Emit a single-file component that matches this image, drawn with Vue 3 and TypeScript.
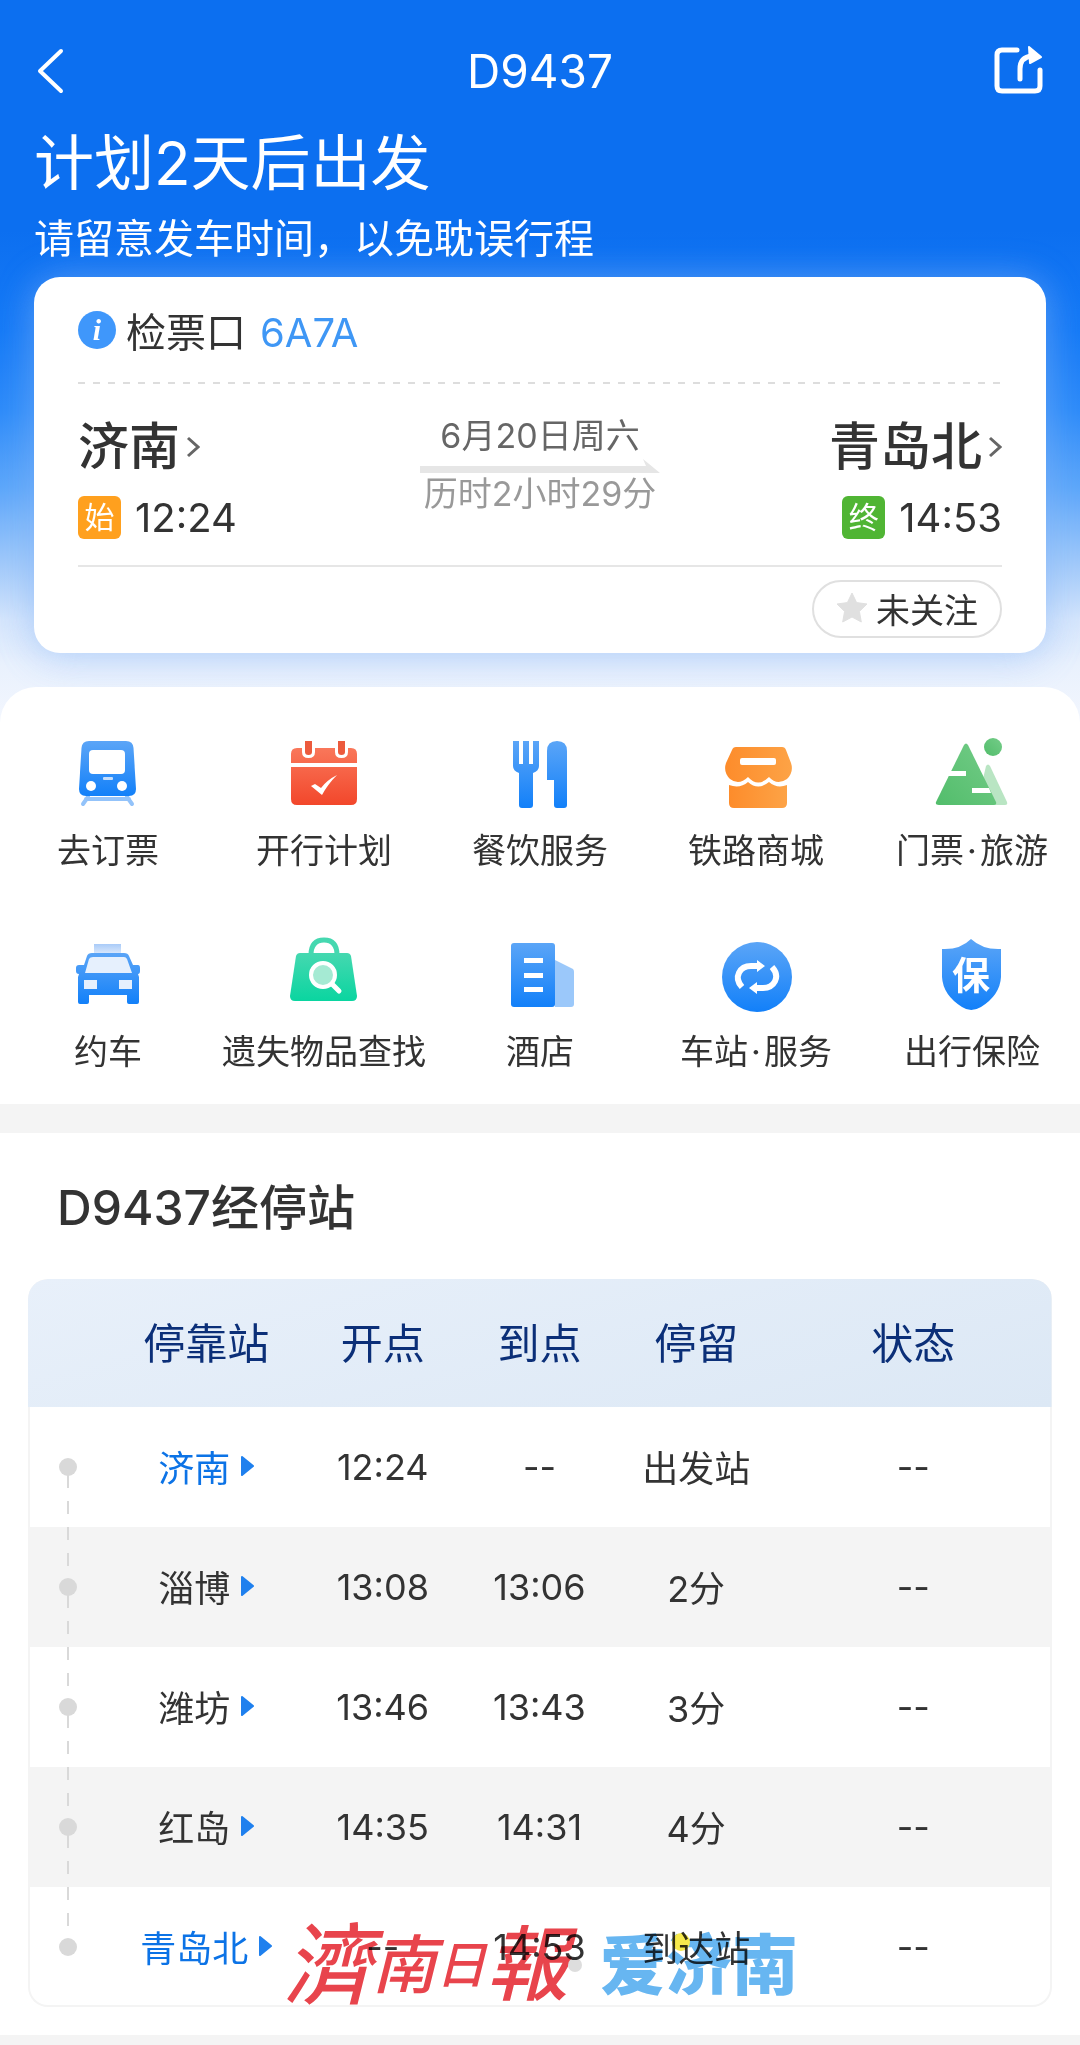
<script setup lang="ts">
interface Service {
  icon: string
  label: string[]
}

interface Stop {
  station: string
  depart: string
  arrive: string
  stay: string
  status: string
  terminal?: boolean
}

const trainNo = 'D9437'

const services: Service[] = [
  { icon: 'train', label: ['去订票'] },
  { icon: 'calendar', label: ['开行计划'] },
  { icon: 'dining', label: ['餐饮服务'] },
  { icon: 'store', label: ['铁路商城'] },
  { icon: 'mountain', label: ['门票', '旅游'] },
  { icon: 'taxi', label: ['约车'] },
  { icon: 'bag', label: ['遗失物品查找'] },
  { icon: 'hotel', label: ['酒店'] },
  { icon: 'station', label: ['车站', '服务'] },
  { icon: 'shield', label: ['出行保险'] },
]

const stops: Stop[] = [
  { station: '济南', depart: '12:24', arrive: '--', stay: '出发站', status: '--', terminal: true },
  { station: '淄博', depart: '13:08', arrive: '13:06', stay: '2分', status: '--' },
  { station: '潍坊', depart: '13:46', arrive: '13:43', stay: '3分', status: '--' },
  { station: '红岛', depart: '14:35', arrive: '14:31', stay: '4分', status: '--' },
  { station: '青岛北', depart: '--', arrive: '14:53', stay: '到达站', status: '--', terminal: true },
]
</script>

<template>
  <div class="page">
    <svg class="defs" width="0" height="0" aria-hidden="true">
      <defs>
        <linearGradient id="g-blue" x1="0" y1="0" x2="0" y2="1">
          <stop offset="0" stop-color="#5ba5f7" />
          <stop offset="1" stop-color="#1280f9" />
        </linearGradient>
        <linearGradient id="g-red" gradientUnits="userSpaceOnUse" x1="0" y1="7" x2="0" y2="72">
          <stop offset="0" stop-color="#fa7d60" />
          <stop offset="1" stop-color="#f2462a" />
        </linearGradient>
        <linearGradient id="g-orange" x1="0" y1="0" x2="1" y2="0">
          <stop offset="0" stop-color="#fd8c2b" />
          <stop offset="1" stop-color="#fda346" />
        </linearGradient>
        <linearGradient id="g-green" x1="0" y1="1" x2="1" y2="0">
          <stop offset="0" stop-color="#52bd6b" />
          <stop offset="1" stop-color="#74cc88" />
        </linearGradient>
        <linearGradient id="g-mint" x1="0" y1="0" x2="0" y2="1">
          <stop offset="0" stop-color="#45d8b0" />
          <stop offset="1" stop-color="#0ad5a0" />
        </linearGradient>
        <linearGradient id="g-sign" x1="0" y1="0" x2="0" y2="1">
          <stop offset="0" stop-color="#a9cbf8" />
          <stop offset="1" stop-color="#dce9fc" />
        </linearGradient>
      </defs>
    </svg>

    <header class="hero">
      <nav class="nav">
        <button class="icon-btn" type="button" aria-label="返回">
          <svg width="52" height="52" viewBox="0 0 52 52">
            <path d="M27 6 L6 26 L27 46" fill="none" stroke="#fff" stroke-width="4" stroke-linecap="round" stroke-linejoin="round" />
          </svg>
        </button>
        <span class="nav-title">{{ trainNo }}</span>
        <button class="icon-btn" type="button" aria-label="分享">
          <svg width="52" height="52" viewBox="0 0 52 52">
            <g fill="none" stroke="#fff" stroke-width="5" stroke-linecap="round" stroke-linejoin="round">
              <path d="M23 5 H8 Q3 5 3 10 V41 Q3 46 8 46 H41 Q46 46 46 41 V25" />
              <path d="M26 34 V24 Q26 12 38 11" />
            </g>
            <path d="M35 2 L47 12 L36 18 Z" fill="#fff" stroke="#fff" stroke-width="2" stroke-linejoin="round" />
          </svg>
        </button>
      </nav>
      <h1>计划2天后出发</h1>
      <p class="hint">请留意发车时间，以免耽误行程</p>

      <section class="card">
        <div class="gate">
          <span class="info">i</span>
          <span>检票口<span class="gate-no">6A7A</span></span>
        </div>
        <div class="dashes"></div>
        <div class="trip">
          <div class="end">
            <a class="city" href="#">
              济南
              <svg width="14" height="22" viewBox="0 0 14 22"><path d="M2 2 L12 11 L2 20" fill="none" stroke="#666" stroke-width="3" /></svg>
            </a>
            <div class="time"><span class="tag tag-start">始</span>12:24</div>
          </div>
          <div class="middle">
            <span class="date">6月20日周六</span>
            <svg width="240" height="14" viewBox="0 0 240 14"><path d="M0 7 H226 L223 0 L240 14 H0 Z" fill="#e6e6e6" /></svg>
            <span class="duration">历时2小时29分</span>
          </div>
          <div class="end end-right">
            <a class="city" href="#">
              青岛北
              <svg width="14" height="22" viewBox="0 0 14 22"><path d="M2 2 L12 11 L2 20" fill="none" stroke="#666" stroke-width="3" /></svg>
            </a>
            <div class="time"><span class="tag tag-end">终</span>14:53</div>
          </div>
        </div>
        <div class="card-foot">
          <button class="follow" type="button">
            <svg width="32" height="32" viewBox="0 0 32 32">
              <path d="M16 1 L20.6 10.6 L31 12 L23.4 19.4 L25.3 30 L16 25 L6.7 30 L8.6 19.4 L1 12 L11.4 10.6 Z" fill="#e0e0e0" stroke="#e0e0e0" stroke-linejoin="round" />
            </svg>
            未关注
          </button>
        </div>
      </section>
    </header>

    <section class="services">
      <a v-for="item in services" :key="item.icon" class="service" href="#">
        <svg width="80" height="80" viewBox="0 0 80 80" aria-hidden="true">
          <g v-if="item.icon === 'train'">
            <path d="M20 63 L15 70 M59 63 L64 70 M18 65 H61" fill="none" stroke="#93c3fa" stroke-width="4" stroke-linecap="round" />
            <path d="M21 7 H58 Q65 7 65.500 14 L68 55 Q68 62 61 62 H18 Q11 62 11 55 L13.500 14 Q14 7 21 7 Z" fill="url(#g-blue)" />
            <rect x="21" y="16" width="36" height="24" rx="4" fill="#fff" />
            <rect x="35" y="43" width="10" height="3" rx="1" fill="#c5defc" />
            <circle cx="23" cy="52" r="5" fill="#fff" />
            <circle cx="54" cy="52" r="5" fill="#fff" />
          </g>
          <g v-else-if="item.icon === 'calendar'">
            <path d="M13 14 H67 Q73 14 73 20 V29 H7 V20 Q7 14 13 14 Z M7 33 H73 V65 Q73 71 67 71 H13 Q7 71 7 65 Z" fill="url(#g-red)" />
            <path d="M18 10 H31 V18 Q31 24 24.500 24 Q18 24 18 18 Z M51 10 H64 V18 Q64 24 57.500 24 Q51 24 51 18 Z" fill="#fff" />
            <path d="M21 7 H28 V18 Q28 21 24.500 21 Q21 21 21 18 Z M54 7 H61 V18 Q61 21 57.500 21 Q54 21 54 18 Z" fill="#ec5a3d" />
            <path d="M27 52 L31 50 L37 54 Q43 46 53 41 Q44 50 38 61 Z" fill="#fff" />
          </g>
          <g v-else-if="item.icon === 'dining'" fill="url(#g-blue)">
            <path d="M13 7 H19 V30 H23 V7 H29 V30 H33 V7 H39 V32 Q39 37 33 39 V71 Q33 74 30 74 H22 Q19 74 19 71 V39 Q13 37 13 32 Z" />
            <path d="M47 17 Q47 7 57 7 Q67 7 67 17 V71 Q67 74 64 74 H57 Q54 74 54 71 V46 H47 Z" />
          </g>
          <g v-else-if="item.icon === 'store'" fill="url(#g-orange)">
            <path d="M20 13 H66 Q69 13 70 16 L75 29 Q78 38 71 45 Q61 52 53 43 Q42 54 32 43 Q23 52 14 45 Q7 38 10 29 L16 16 Q17 13 20 13 Z" />
            <path d="M13 51 Q24 55 32 48 Q42 57 53 48 Q61 55 71 51 V69 Q71 74 66 74 H18 Q13 74 13 69 Z" />
            <rect x="24" y="24" width="36" height="7" rx="2" fill="#fff" />
          </g>
          <g v-else-if="item.icon === 'mountain'">
            <path d="M54 32 Q56 29 58 32 L75 68 Q76 71 73 71 H45 Z" fill="#b9e5c3" />
            <path d="M32 11 Q34 8 36 11 L64 68 Q65 71 62 71 H7 Q3 71 4 68 Z" fill="url(#g-green)" />
            <circle cx="61" cy="13" r="9" fill="url(#g-green)" />
            <path d="M16 37 H34 V42 H13 Z M40 54 H57 L59 59 H40 Z" fill="#fff" />
          </g>
          <g v-else-if="item.icon === 'taxi'">
            <rect x="26" y="9" width="27" height="10" fill="url(#g-sign)" />
            <path d="M24 18 H56 Q60 18 61 21 L65 30 H70 Q72 30 72 33 V36 Q72 39 70 39 L71 42 V67 Q71 69 69 69 H61 Q59 69 59 67 V60 H21 V67 Q21 69 19 69 H12 Q10 69 10 67 V42 L11 39 Q8 39 8 36 V33 Q8 30 11 30 H16 L19 21 Q20 18 24 18 Z" fill="url(#g-blue)" />
            <path d="M25 22 H56 Q58 22 59 24 L64 38 H17 L21 24 Q22 22 25 22 Z M16 45 H29 V54 H16 Z M51 45 H64 V54 H51 Z" fill="#e6f0fd" />
          </g>
          <g v-else-if="item.icon === 'bag'">
            <path d="M27 20 Q27 5 40 5 Q53 5 53 20" fill="none" stroke="#45d8b0" stroke-width="5" />
            <path d="M16 18 H63 Q66 18 67 21 L73 61 Q73 66 68 66 H11 Q6 66 6 61 L12 21 Q13 18 16 18 Z" fill="url(#g-mint)" />
            <path d="M48 49 L55 56" stroke="#fff" stroke-width="5" stroke-linecap="round" />
            <circle cx="39" cy="40" r="12" fill="#a5ead3" stroke="#fff" stroke-width="4" />
          </g>
          <g v-else-if="item.icon === 'hotel'">
            <path d="M55 25 L73 34 Q74 35 74 37 V69 Q74 72 71 72 H55 Z" fill="#9bc8fa" />
            <rect x="11" y="8" width="44" height="64" rx="3" fill="url(#g-blue)" />
            <path d="M24 23 H43 V28 H24 Z M24 38 H43 V43 H24 Z M24 52 H43 V57 H24 Z" fill="#fff" />
          </g>
          <g v-else-if="item.icon === 'station'">
            <circle cx="41" cy="42" r="35" fill="url(#g-blue)" />
            <g fill="none" stroke="#fff" stroke-width="6">
              <path d="M26 52 C17 42 24 31 35 31 H42" />
              <path d="M56 32 C65 42 58 53 47 53 H40" />
            </g>
            <path d="M41 25 L49 31 L41 37 Z M41 47 L33 53 L41 59 Z" fill="#fff" />
          </g>
          <g v-else>
            <path d="M39 4 Q51 15 69 14 V42 Q68 60 49 72 Q39 78 30 72 Q11 60 10 42 V14 Q28 15 39 4 Z" fill="url(#g-blue)" />
            <text class="shield-text" x="39" y="54" text-anchor="middle">保</text>
          </g>
        </svg>
        <span>{{ item.label[0] }}<template v-if="item.label[1]"><span class="mid-dot">·</span>{{ item.label[1] }}</template></span>
      </a>
    </section>

    <section class="route">
      <h2>{{ trainNo }}经停站</h2>
      <div class="table-box">
        <table>
          <colgroup>
            <col class="c-line" />
            <col class="c-station" />
            <col class="c-mid" />
            <col class="c-mid" />
            <col class="c-mid" />
            <col />
          </colgroup>
          <thead>
            <tr>
              <th></th>
              <th scope="col">停靠站</th>
              <th scope="col">开点</th>
              <th scope="col">到点</th>
              <th scope="col">停留</th>
              <th scope="col">状态</th>
            </tr>
          </thead>
          <tbody>
            <tr v-for="(stop, i) in stops" :key="stop.station">
              <td>
                <svg class="track" width="18" height="120" viewBox="0 0 18 120" fill="#d9d9d9" aria-hidden="true">
                  <path v-if="i > 0" d="M8 0 h2 v13 h-2 Z M8 26 h2 v13 h-2 Z" />
                  <circle cx="9" cy="60" r="9" />
                  <path v-if="i < stops.length - 1" d="M8 68 h2 v13 h-2 Z M8 94 h2 v13 h-2 Z" />
                </svg>
              </td>
              <td class="station-cell">
                <a class="stop" :class="{ terminal: stop.terminal }" href="#">
                  {{ stop.station }}
                  <svg width="13" height="20" viewBox="0 0 13 20"><path d="M1 1 L12 10 L1 19 Z" fill="#1f80ee" stroke="#1f80ee" stroke-width="2" stroke-linejoin="round" /></svg>
                </a>
              </td>
              <td>{{ stop.depart }}</td>
              <td>{{ stop.arrive }}</td>
              <td class="stay-cell">{{ stop.stay }}</td>
              <td>{{ stop.status }}</td>
            </tr>
          </tbody>
        </table>
        <div class="marks">
          <span class="mark-red"><i class="k1">濟</i><i class="k2">南</i><i class="k3">日</i><i class="k4">報</i></span>
          <span class="mark-dot"></span>
          <span class="mark-blue">爱济南</span>
          <span class="mark-sun"></span>
        </div>
      </div>
    </section>
    <div class="page-end"></div>
  </div>
</template>

<style>
body {
  background: #f4f4f4;
}
</style>

<style scoped>
.page {
  font-family: Inter, "Noto Sans CJK SC", sans-serif;
  color: #333;
  background: linear-gradient(#0c6ff0 0, #0c6ff0 230px, #167af6 330px, #2e8cf9 410px, #5fa8fa 490px, #a3cbfa 565px, #d6e6fc 620px, #e9f1fd 665px, #f4f7fe 730px) no-repeat;
  background-size: 100% 730px;
}

.defs {
  position: absolute;
}

a {
  color: inherit;
  text-decoration: none;
}

button {
  font: inherit;
  color: inherit;
  padding: 0;
  border: 0;
  background: none;
}

svg {
  display: block;
  flex: none;
}

.hero {
  padding: 25px 34px 34px;
}

.nav {
  height: 92px;
  display: flex;
  align-items: center;
  justify-content: space-between;
  color: #fff;
}

.nav-title {
  font-size: 46px;
}

h1 {
  margin: 0;
  font-size: 60px;
  line-height: 92px;
  font-weight: 400;
  color: #fff;
}

.hint {
  margin: 0 0 8px;
  font-size: 40px;
  line-height: 60px;
  color: #fff;
}

.card {
  padding: 0 44px;
  border-radius: 26px;
  background: #fff;
  box-shadow: 0 0 36px rgba(130, 180, 250, 0.45), 0 8px 40px rgba(150, 190, 245, 0.2);
}

.gate {
  height: 105px;
  display: flex;
  align-items: center;
  font-size: 40px;
}

.info {
  width: 38px;
  height: 38px;
  margin-right: 10px;
  border-radius: 50%;
  background: #3f97fb;
  color: #fff;
  font: italic 700 30px/38px "Liberation Serif", serif;
  text-align: center;
}

.gate-no {
  margin-left: 14px;
  color: #3f97f5;
}

.dashes {
  height: 2px;
  background: repeating-linear-gradient(90deg, #ddd 0, #ddd 7px, transparent 7px, transparent 15px);
}

.trip {
  display: grid;
  grid-template-columns: 1fr auto 1fr;
  padding: 31px 0 26px;
  border-bottom: 2px solid #e6e6e6;
}

.end {
  display: flex;
  flex-direction: column;
  align-items: flex-start;
  gap: 16px;
}

.end-right {
  align-items: flex-end;
}

.city {
  display: flex;
  align-items: center;
  gap: 6px;
  font-size: 51px;
  line-height: 64px;
  font-weight: 500;
}

.time {
  display: flex;
  align-items: center;
  gap: 14px;
  height: 44px;
  font-size: 40px;
}

.tag {
  width: 43px;
  height: 43px;
  border-radius: 6px;
  color: #fff;
  font-size: 30px;
  line-height: 43px;
  text-align: center;
}

.tag-start {
  background: #ffa01e;
}

.tag-end {
  background: #50b534;
}

.middle {
  display: flex;
  flex-direction: column;
  align-items: center;
  font-size: 34px;
  line-height: 42px;
}

.middle svg {
  margin-top: 2px;
}

.date {
  color: #666;
}

.duration {
  color: #999;
}

.card-foot {
  display: flex;
  justify-content: flex-end;
  padding: 13px 0 15px;
}

.follow {
  display: flex;
  align-items: center;
  justify-content: center;
  gap: 8px;
  width: 190px;
  height: 58px;
  padding-bottom: 2px;
  border: 2px solid #e0e0e0;
  border-radius: 29px;
  font-size: 34px;
}

.services {
  display: grid;
  grid-template-columns: repeat(5, 1fr);
  row-gap: 60px;
  padding: 47px 0 28px;
  border-radius: 36px 36px 0 0;
  background: #fff;
}

.service {
  display: flex;
  flex-direction: column;
  align-items: center;
  gap: 13px;
  font-size: 34px;
  line-height: 48px;
  white-space: nowrap;
}

.mid-dot {
  margin: 0 3px;
}

.shield-text {
  font-size: 38px;
  font-weight: 700;
  fill: #fff;
}

.route {
  border-top: 29px solid #f4f4f4;
  padding: 0 28px 28px;
  background: #fff;
}

h2 {
  margin: 0;
  padding: 4px 0 0 29px;
  font-size: 48px;
  line-height: 142px;
  font-weight: 500;
}

.table-box {
  position: relative;
  border-radius: 20px;
  box-shadow: inset 0 0 0 2px #f4f4f4;
}

table {
  width: 100%;
  table-layout: fixed;
  border-spacing: 0;
  border-radius: 20px;
  overflow: hidden;
  font-size: 36px;
  text-align: center;
}

.c-line {
  width: 7.8%;
}

.c-station {
  width: 19.2%;
}

.c-mid {
  width: 15.3%;
}

thead tr {
  background: linear-gradient(165deg, #e8f0fa, #dce8f5);
}

th {
  box-sizing: border-box;
  height: 128px;
  padding: 0 0 6px;
  font-size: 42px;
  font-weight: 400;
  color: #0b2f78;
}

th:first-child {
  border-top-left-radius: 20px;
}

th:last-child {
  border-top-right-radius: 20px;
}

td {
  box-sizing: border-box;
  height: 120px;
  padding: 0;
}

.station-cell,
.stay-cell {
  padding-bottom: 2px;
}

tbody tr:nth-child(even) {
  background: #f4f4f4;
}

.track {
  margin: 0 auto;
}

.stop {
  display: flex;
  align-items: center;
  justify-content: center;
  gap: 11px;
}

.terminal {
  color: #0c73e6;
}

/* Publisher marks lie over the last row of the table. */
.marks {
  position: absolute;
  left: 256px;
  bottom: -10px;
  height: 104px;
  display: flex;
  align-items: center;
  mix-blend-mode: multiply;
  pointer-events: none;
}

.mark-red {
  display: flex;
  align-items: center;
  color: #e8444c;
  font-weight: 500;
  line-height: 104px;
}

.k1 {
  font-size: 88px;
}

.k2 {
  font-size: 64px;
}

.k3 {
  font-size: 50px;
}

.k4 {
  font-size: 82px;
}

.mark-dot {
  width: 14px;
  height: 14px;
  margin-right: 18px;
  border-radius: 50%;
  background: #ddd;
}

.mark-blue {
  color: #67b6f1;
  font-size: 66px;
  font-weight: 900;
  line-height: 104px;
}

.mark-sun {
  position: absolute;
  right: 108px;
  top: 20px;
  width: 18px;
  height: 18px;
  border-radius: 50%;
  background: #f7ea4c;
}

.page-end {
  height: 10px;
  background: #f4f4f4;
}
</style>
